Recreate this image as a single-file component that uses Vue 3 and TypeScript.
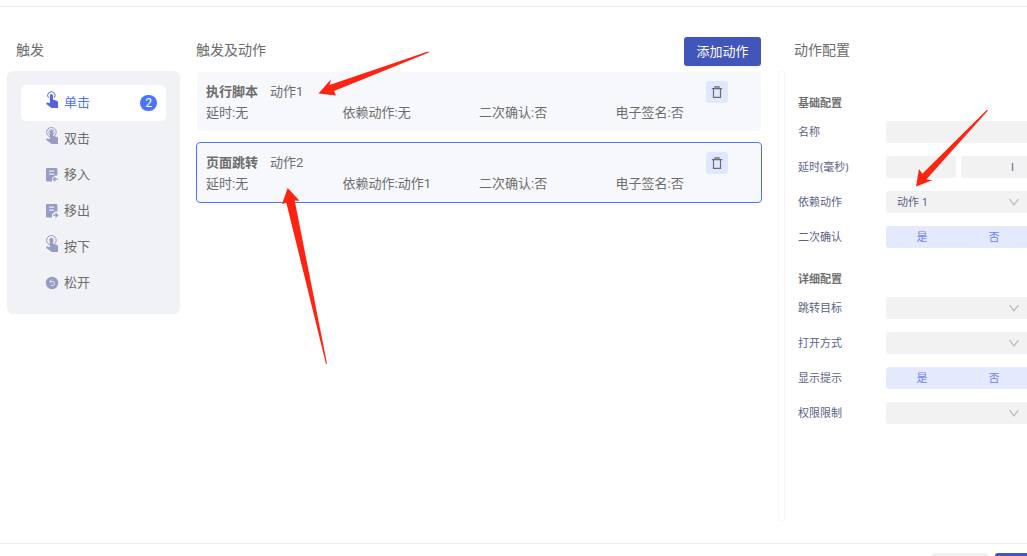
<script setup lang="ts">
import { ref } from 'vue'

type IconName = 'tap' | 'double' | 'enter' | 'leave' | 'press' | 'release'

interface Trigger {
  name: string
  icon: IconName
  count?: number
}

interface Action {
  id: number
  type: string
  name: string
  details: string[]
}

interface Field {
  id: string
  label: string
  kind: 'text' | 'delay' | 'select' | 'toggle'
  value?: string
}

interface Section {
  title: string
  fields: Field[]
}

const triggers: Trigger[] = [
  { name: '单击', icon: 'tap', count: 2 },
  { name: '双击', icon: 'double' },
  { name: '移入', icon: 'enter' },
  { name: '移出', icon: 'leave' },
  { name: '按下', icon: 'press' },
  { name: '松开', icon: 'release' },
]

const actions: Action[] = [
  { id: 1, type: '执行脚本', name: '动作1', details: ['延时:无', '依赖动作:无', '二次确认:否', '电子签名:否'] },
  { id: 2, type: '页面跳转', name: '动作2', details: ['延时:无', '依赖动作:动作1', '二次确认:否', '电子签名:否'] },
]

const sections: Section[] = [
  {
    title: '基础配置',
    fields: [
      { id: 'name', label: '名称', kind: 'text' },
      { id: 'delay', label: '延时(毫秒)', kind: 'delay' },
      { id: 'depend', label: '依赖动作', kind: 'select', value: '动作 1' },
      { id: 'confirm', label: '二次确认', kind: 'toggle' },
    ],
  },
  {
    title: '详细配置',
    fields: [
      { id: 'target', label: '跳转目标', kind: 'select' },
      { id: 'mode', label: '打开方式', kind: 'select' },
      { id: 'tip', label: '显示提示', kind: 'toggle' },
      { id: 'auth', label: '权限限制', kind: 'select' },
    ],
  },
]

const activeTrigger = ref('单击')
const activeAction = ref(2)
</script>

<template>
  <div class="page">
    <main class="body">
      <section class="triggers">
        <header class="head"><h2>触发</h2></header>
        <nav class="trigger-list">
          <button
            v-for="t in triggers"
            :key="t.name"
            type="button"
            class="trigger"
            :class="{ active: t.name === activeTrigger }"
            @click="activeTrigger = t.name"
          >
            <svg v-if="t.icon === 'enter' || t.icon === 'leave'" class="icon" viewBox="0 0 12 18" aria-hidden="true">
              <path d="M1.2 2h9a1.200 1.200 0 0 1 1.200 1.200V9.400H9L6 12v3.500H1.200A1.200 1.200 0 0 1 0 14.300V3.200A1.200 1.200 0 0 1 1.200 2z" fill="currentColor" />
              <path d="M3 5.200h5.200M3 8.200h5.200" stroke="#e4e6f0" stroke-width="1.200" fill="none" />
              <path v-if="t.icon === 'enter'" d="M12 13.200H7.500M9.400 11.200l-2.200 2 2.200 2" stroke="currentColor" stroke-width="1.300" fill="none" />
              <path v-else d="M7 13.200h4.500M9.500 11.200l2.200 2-2.200 2" stroke="currentColor" stroke-width="1.300" fill="none" />
            </svg>
            <svg v-else-if="t.icon === 'release'" class="icon" viewBox="0 0 12 18" aria-hidden="true">
              <circle cx="6" cy="9" r="6.200" fill="currentColor" />
              <path d="M5.600 5.500L4 7.400l1.600 1.800M4.200 7.400h2.200a2 2 0 0 1 0 4.100H5" stroke="#e4e6f0" stroke-width="1" fill="none" />
            </svg>
            <svg v-else class="icon raised" viewBox="0 0 12 18" aria-hidden="true">
              <path v-if="t.icon === 'tap'" d="M2.400 6.700A3.700 3.700 0 1 1 8.300 6.700" fill="none" stroke="currentColor" stroke-width="1" />
              <template v-else>
                <circle cx="5.400" cy="5.300" r="4.800" fill="none" stroke="currentColor" stroke-width="1" />
                <circle v-if="t.icon === 'double'" cx="5.400" cy="5.300" r="2.700" fill="none" stroke="currentColor" stroke-width=".8" />
                <circle v-else cx="5.400" cy="5.300" r="2.500" fill="currentColor" opacity=".5" />
              </template>
              <path d="M3.900 4.400a1.500 1.500 0 0 1 3 0V8.600l4.200 1.300q1 .4.900 1.500V17H5.600L.3 13q-.4-1.300.9-1.600L3.900 12.300z" fill="currentColor" />
            </svg>
            <span>{{ t.name }}</span>
            <span v-if="t.count" class="badge">{{ t.count }}</span>
          </button>
        </nav>
      </section>

      <section class="actions">
        <header class="head">
          <h2>触发及动作</h2>
          <button type="button" class="add">添加动作</button>
        </header>
        <div class="cards">
          <article
            v-for="a in actions"
            :key="a.id"
            class="card"
            :class="{ selected: a.id === activeAction }"
            @click="activeAction = a.id"
          >
            <div class="card-top">
              <strong>{{ a.type }}</strong>
              <span>{{ a.name }}</span>
              <button type="button" class="trash" aria-label="删除">
                <svg viewBox="0 0 12 12" aria-hidden="true">
                  <path d="M.8 2.700h10.400M4 2.500V.8h4v1.700M2.500 3v8.400h7V3" fill="none" stroke="currentColor" stroke-width="1.200" />
                </svg>
              </button>
            </div>
            <div class="card-details">
              <span v-for="d in a.details" :key="d">{{ d }}</span>
            </div>
          </article>
        </div>
      </section>

      <section class="config">
        <header class="head"><h2>动作配置</h2></header>
        <div class="config-body">
          <div class="rail"></div>
          <form class="form" @submit.prevent>
            <section v-for="s in sections" :key="s.title" class="group">
              <h3>{{ s.title }}</h3>
              <div v-for="f in s.fields" :key="f.id" class="row">
                <label :for="f.kind === 'toggle' ? f.id + '-yes' : f.id">{{ f.label }}</label>
                <input v-if="f.kind === 'text'" :id="f.id" class="field" type="text" />
                <div v-else-if="f.kind === 'delay'" class="pair">
                  <input :id="f.id" class="field" type="text" />
                  <input class="field unit" type="text" value="I" aria-label="延时" />
                </div>
                <div v-else-if="f.kind === 'select'" class="select">
                  <select :id="f.id" class="field">
                    <option>{{ f.value }}</option>
                  </select>
                  <svg viewBox="0 0 12 8" aria-hidden="true">
                    <path d="M1.500 1L6 6.800 10.500 1" fill="none" stroke="currentColor" stroke-width="1.200" />
                  </svg>
                </div>
                <div v-else class="toggle">
                  <label><input :id="f.id + '-yes'" type="radio" :name="f.id" />是</label>
                  <label><input type="radio" :name="f.id" />否</label>
                </div>
              </div>
            </section>
          </form>
        </div>
      </section>
    </main>

    <footer class="footer">
      <button type="button" class="cancel" aria-label="取消"></button>
      <button type="button" class="ok" aria-label="确定"></button>
    </footer>

    <svg class="arrows" width="1027" height="556" viewBox="0 0 1027 556" aria-hidden="true">
      <path d="M318.500 93.500L331 79.300 329.500 85 428 51.500 429 52.500 334 91 336 95.500z" />
      <path d="M287.700 188L282 204 286.300 202.700 326 364 327 363.500 294.700 200.500 299.500 200.700z" />
      <path d="M916 186.500L919 169 922.300 173.700 987 109.800 988 110.500 926.500 179.300 932.300 180.300z" />
    </svg>
  </div>
</template>

<style>
body {
  margin: 0;
  background: #fff;
}
</style>

<style scoped>
.page {
  position: relative;
  display: flex;
  flex-direction: column;
  box-sizing: border-box;
  height: 100vh;
  padding-top: 6px;
  overflow: hidden;
  background: #fff;
  color: #6c6c6c;
  font: 400 13px/20px Roboto, "Noto Sans CJK SC", sans-serif;
}
button,
input,
select {
  box-sizing: border-box;
  margin: 0;
  border: 0;
  padding: 0;
  font: inherit;
  color: inherit;
}
button {
  cursor: pointer;
}
.body {
  flex: 1;
  min-height: 0;
  display: flex;
  gap: 16px;
  padding: 30px 0 22px 7px;
  border-top: 1px solid #ececee;
}
.head {
  display: flex;
  justify-content: space-between;
  height: 29px;
  margin-bottom: 5px;
}
h2 {
  margin: 0;
  font-size: 14px;
  line-height: 26px;
  font-weight: 400;
}
.triggers {
  flex: none;
  width: 173px;
}
.triggers .head {
  padding-left: 9px;
}
.trigger-list {
  display: flex;
  flex-direction: column;
  padding: 14px 14px 13px;
  border-radius: 6px;
  background: #f1f2f6;
}
.trigger {
  display: flex;
  align-items: center;
  gap: 6px;
  height: 36px;
  padding: 0 9px 0 25px;
  border-radius: 5px;
  background: transparent;
}
.trigger.active {
  background: #fff;
  color: #4f74ff;
}
.icon {
  width: 12px;
  height: 18px;
  color: #969cc4;
  overflow: visible;
}
.raised {
  margin-bottom: 6px;
}
.active .icon {
  color: #5562d8;
}
.badge {
  margin-left: auto;
  width: 17px;
  height: 16px;
  border-radius: 8px;
  background: #4a74ff;
  color: #fff;
  font-size: 12px;
  line-height: 16px;
  text-align: center;
}
.actions {
  flex: 1;
  min-width: 0;
}
.add {
  width: 77px;
  margin-right: 1px;
  border-radius: 3px;
  background: #4155bb;
  color: #fff;
  box-shadow: 0 2px 2px #0000000b;
}
.cards {
  display: flex;
  flex-direction: column;
  gap: 10px;
}
.card {
  padding: 9px 9px 8px;
  border: 1px solid transparent;
  border-radius: 4px;
  background: #f7f8fc;
  background-clip: padding-box;
}
.card.selected {
  border-color: #4f74f5;
}
.card-top {
  display: flex;
  align-items: center;
  gap: 12px;
  height: 22px;
  padding-right: 24px;
}
strong {
  font-weight: 700;
}
.trash {
  display: grid;
  place-items: center;
  width: 22px;
  height: 22px;
  margin-left: auto;
  border-radius: 3px;
  background: #e1e7fe;
}
.trash svg {
  width: 12px;
  height: 12px;
}
.card-details {
  display: grid;
  grid-template-columns: repeat(4, 1fr);
  line-height: 20px;
}
.config {
  flex: none;
  width: 249px;
  display: flex;
  flex-direction: column;
}
.config .head {
  flex: none;
  padding-left: 16px;
}
.config-body {
  flex: 1;
  min-height: 0;
  display: flex;
  gap: 13px;
}
.rail {
  flex: none;
  box-sizing: border-box;
  width: 7px;
  border: 1px solid #f6f6f6;
  border-radius: 3px;
}
.form {
  display: flex;
  flex-direction: column;
  gap: 23px;
  padding-top: 24px;
  font-family: "Noto Sans", "Noto Sans CJK SC", sans-serif;
  font-size: 11px;
  line-height: 16px;
  color: #5c6286;
}
.group {
  display: flex;
  flex-direction: column;
  gap: 13px;
}
h3 {
  margin: 0 0 -3px;
  font-size: 11px;
  line-height: 16px;
  font-weight: 700;
  color: #707070;
}
.row {
  display: grid;
  grid-template-columns: 88px 144px;
  align-items: center;
  height: 22px;
}
.field {
  width: 100%;
  height: 22px;
  padding: 0 11px;
  border-radius: 3px;
  background: #f2f2f2;
  appearance: none;
}
.pair {
  display: grid;
  grid-template-columns: 70px 69px;
  gap: 5px;
}
.unit {
  padding-right: 16px;
  font-family: Roboto, sans-serif;
  text-align: right;
}
.select {
  position: relative;
}
.select svg {
  position: absolute;
  top: 7px;
  right: 10px;
  width: 12px;
  height: 8px;
  color: #b5b5b5;
  pointer-events: none;
}
.toggle {
  display: grid;
  grid-template-columns: 1fr 1fr;
  border-radius: 3px;
  background: #e4e9fd;
  color: #6f83f0;
  line-height: 22px;
  text-align: center;
}
.toggle input {
  position: absolute;
  opacity: 0;
}
.footer {
  flex: none;
  display: flex;
  justify-content: flex-end;
  gap: 7px;
  box-sizing: border-box;
  height: 13px;
  padding-top: 9px;
  border-top: 1px solid #ececee;
}
.footer button {
  flex: none;
  height: 29px;
  border-radius: 3px;
}
.cancel {
  width: 56px;
  background: #f1f1f1;
}
.ok {
  width: 56px;
  margin-right: -24px;
  background: #4155bb;
}
.arrows {
  position: absolute;
  top: 0;
  left: 0;
  fill: #ff2312;
  pointer-events: none;
}
</style>
